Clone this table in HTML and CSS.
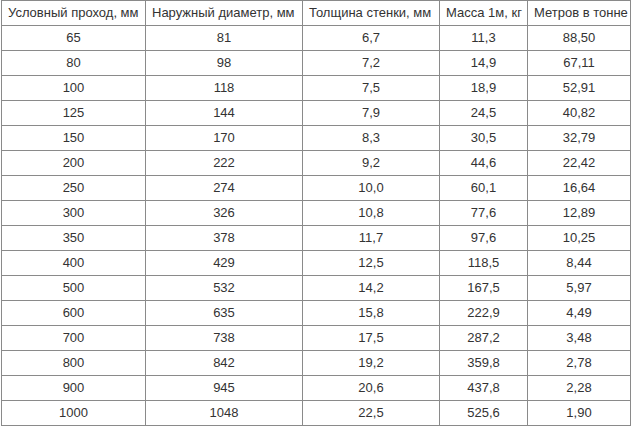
FILE: index.html
```html
<!DOCTYPE html>
<html>
<head>
<meta charset="utf-8">
<link rel="stylesheet" href="styles.css">
</head>
<body>
<table class="pipes">
<colgroup>
<col class="c1"><col class="c2"><col class="c3"><col class="c4"><col class="c5">
</colgroup>
<thead>
<tr><th>Условный проход, мм</th><th>Наружный диаметр, мм</th><th>Толщина стенки, мм</th><th>Масса 1м, кг</th><th>Метров в тонне</th></tr>
</thead>
<tbody>
<tr><td>65</td><td>81</td><td>6,7</td><td>11,3</td><td>88,50</td></tr>
<tr><td>80</td><td>98</td><td>7,2</td><td>14,9</td><td>67,11</td></tr>
<tr><td>100</td><td>118</td><td>7,5</td><td>18,9</td><td>52,91</td></tr>
<tr><td>125</td><td>144</td><td>7,9</td><td>24,5</td><td>40,82</td></tr>
<tr><td>150</td><td>170</td><td>8,3</td><td>30,5</td><td>32,79</td></tr>
<tr><td>200</td><td>222</td><td>9,2</td><td>44,6</td><td>22,42</td></tr>
<tr><td>250</td><td>274</td><td>10,0</td><td>60,1</td><td>16,64</td></tr>
<tr><td>300</td><td>326</td><td>10,8</td><td>77,6</td><td>12,89</td></tr>
<tr><td>350</td><td>378</td><td>11,7</td><td>97,6</td><td>10,25</td></tr>
<tr><td>400</td><td>429</td><td>12,5</td><td>118,5</td><td>8,44</td></tr>
<tr><td>500</td><td>532</td><td>14,2</td><td>167,5</td><td>5,97</td></tr>
<tr><td>600</td><td>635</td><td>15,8</td><td>222,9</td><td>4,49</td></tr>
<tr><td>700</td><td>738</td><td>17,5</td><td>287,2</td><td>3,48</td></tr>
<tr><td>800</td><td>842</td><td>19,2</td><td>359,8</td><td>2,78</td></tr>
<tr><td>900</td><td>945</td><td>20,6</td><td>437,8</td><td>2,28</td></tr>
<tr><td>1000</td><td>1048</td><td>22,5</td><td>525,6</td><td>1,90</td></tr>
</tbody>
</table>
</body>
</html>
```

FILE: styles.css
```css
html, body {
  margin: 0;
  padding: 0;
  background: #ffffff;
}
body {
  padding: 0 0 0 1px;
}
.pipes {
  border-collapse: collapse;
  table-layout: fixed;
  width: 630px;
  font-family: "Liberation Sans", Arial, sans-serif;
  font-size: 13px;
  color: #333333;
}
.c1 { width: 144px; }
.c2 { width: 157px; }
.c3 { width: 137px; }
.c4 { width: 88px; }
.c5 { width: 103px; }
.pipes th,
.pipes td {
  border: 1px solid #8a8a8a;
  height: 24px;
  padding: 0 6px;
  line-height: 16px;
  vertical-align: middle;
  white-space: nowrap;
}
.pipes th {
  font-weight: normal;
  text-align: left;
}
.pipes td {
  text-align: center;
}
```
